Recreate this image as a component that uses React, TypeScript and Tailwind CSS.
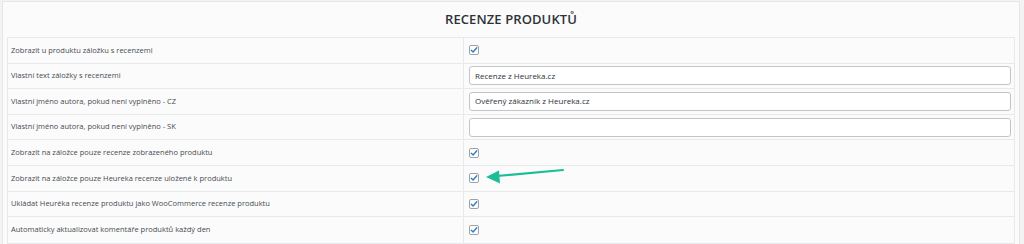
const rows: { label: string; kind: "check" | "text"; value?: string }[] = [
  { label: "Zobrazit u produktu záložku s recenzemi", kind: "check" },
  { label: "Vlastní text záložky s recenzemi", kind: "text", value: "Recenze z Heureka.cz" },
  { label: "Vlastní jméno autora, pokud není vyplněno - CZ", kind: "text", value: "Ověřený zákazník z Heureka.cz" },
  { label: "Vlastní jméno autora, pokud není vyplněno - SK", kind: "text", value: "" },
  { label: "Zobrazit na záložce pouze recenze zobrazeného produktu", kind: "check" },
  { label: "Zobrazit na záložce pouze Heureka recenze uložené k produktu", kind: "check" },
  { label: "Ukládat Heuréka recenze produktu jako WooCommerce recenze produktu", kind: "check" },
  { label: "Automaticky aktualizovat komentáře produktů každý den", kind: "check" },
];

function Checkbox() {
  return (
    <span className="flex h-[10px] w-[10px] items-center justify-center rounded-[2px] border border-[#9ea3a8] bg-white">
      <svg width="8" height="8" viewBox="0 0 8 8">
        <path d="M1.3 4.2 L3.1 6 L6.8 1.8" fill="none" stroke="#2f7fc6" strokeWidth="1.4" strokeLinecap="round" strokeLinejoin="round" />
      </svg>
    </span>
  );
}

export default function App() {
  return (
    <div className="h-[244px] w-[1024px] overflow-hidden bg-[#f3f3f3] pl-[2px] pr-[4px] pt-[1px] font-['Open_Sans',sans-serif]">
      <div className="relative h-[260px] border border-[#e6e6e6] bg-[#fbfbfb] px-[4px]">
        <h2 className="flex h-[35px] items-center justify-center pt-[1px] text-[13px] font-semibold tracking-[0.1px] text-[#2c3338]">
          RECENZE PRODUKTŮ
        </h2>
        <div className="border border-[#e8e9ea] bg-[#fbfbfb]">
          {rows.map((r, i) => (
            <div key={i} className="flex h-[25.6px] border-b border-[#e8e9ea] last:border-b-0">
              <div className="flex w-[456px] items-center border-r border-[#e8e9ea] pl-[3px] text-[7.5px] text-[#464c52]">
                {r.label}
              </div>
              <div className="flex flex-1 items-center pl-[5px] pr-[3px]">
                {r.kind === "check" ? (
                  <Checkbox />
                ) : (
                  <div className="flex h-[19px] w-full items-center rounded-[3px] border border-[#c3c4c7] bg-white px-[5px] text-[8px] text-[#2c3338]">
                    {r.value}
                  </div>
                )}
              </div>
            </div>
          ))}
        </div>
        <svg className="absolute left-[478px] top-[163px]" width="90" height="22" viewBox="0 0 90 22">
          <path d="M82 5 L16 11" stroke="#1dbd98" strokeWidth="2.2" strokeLinecap="round" />
          <path d="M5 12 L18 5.5 L19 18.5 Z" fill="#1dbd98" />
        </svg>
      </div>
    </div>
  );
}
